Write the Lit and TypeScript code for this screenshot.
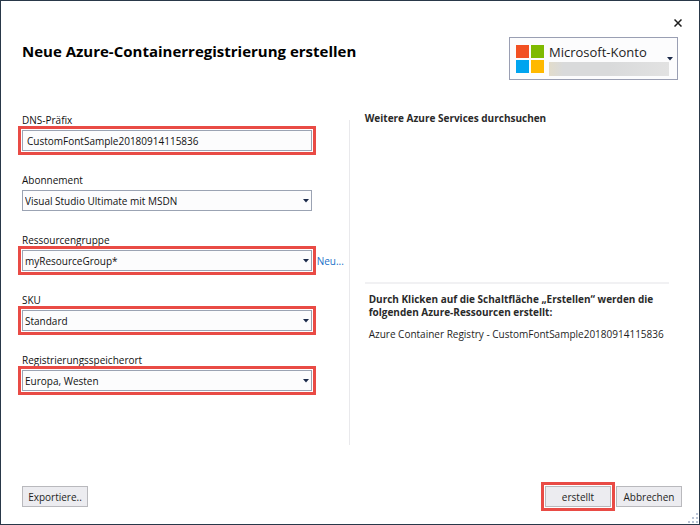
import { LitElement, html, css, svg } from "lit";
import { customElement } from "lit/decorators.js";
import { classMap } from "lit/directives/class-map.js";

interface Field {
  id: string;
  label: string;
  value: string;
  kind: "text" | "select";
  marked: boolean;
  link?: string;
}

const registryName = "CustomFontSample20180914115836";

const fields: Field[] = [
  { id: "dns", label: "DNS-Präfix", value: registryName, kind: "text", marked: true },
  { id: "subscription", label: "Abonnement", value: "Visual Studio Ultimate mit MSDN", kind: "select", marked: false },
  { id: "group", label: "Ressourcengruppe", value: "myResourceGroup*", kind: "select", marked: true, link: "Neu..." },
  { id: "sku", label: "SKU", value: "Standard", kind: "select", marked: true },
  { id: "location", label: "Registrierungsspeicherort", value: "Europa, Westen", kind: "select", marked: true },
];

const gripDots = [[8, 0], [4, 4], [8, 4], [0, 8], [4, 8], [8, 8]];

@customElement("app-root")
export class AppRoot extends LitElement {
  static styles = css`
    :host {
      display: block;
      font-family: "Open Sans", "Noto Sans", sans-serif;
      font-size: 10px;
      line-height: 16px;
      color: #1e1e1e;
    }
    * { box-sizing: border-box; }
    .dialog {
      position: relative;
      display: flex;
      flex-direction: column;
      min-height: 100vh;
      padding: 16px 17px 17px 21px;
      border: 1px solid #293849;
      background: #fff;
    }
    button, input, select { font: inherit; color: inherit; margin: 0; }
    .header { display: flex; justify-content: space-between; align-items: flex-start; }
    .title { margin: 22px 0 0; font-size: 15px; line-height: 24px; font-weight: 700; color: #000; }
    .tools { display: flex; flex-direction: column; align-items: flex-end; gap: 8px; padding-right: 4px; }
    .close { display: flex; padding: 2px 0; border: 0; background: none; margin-right: -4px; }
    .account {
      display: flex;
      align-items: center;
      height: 43px;
      padding: 0 4px 0 6px;
      border: 1px solid #9a9fb3;
      background: #fcfcfd;
      text-align: left;
    }
    .who { display: block; width: 114px; margin-left: 5px; font-size: 13px; line-height: 20px; white-space: nowrap; }
    .redacted {
      display: block;
      width: 120px;
      height: 14px;
      margin-left: 5px;
      margin-right: -2px;
      background: linear-gradient(90deg, #e2dccb, #d9dadb 12%, #d9dadb 50%, #e2e2e2);
    }
    .body { display: grid; grid-template-columns: minmax(0, 49fr) minmax(0, 50fr); margin-top: 32px; }
    .form { display: flex; flex-direction: column; gap: 21px; }
    .field { display: grid; grid-template-columns: minmax(0, 1fr) 32px; column-gap: 5px; row-gap: 2px; align-items: center; }
    .label { grid-column: 1 / -1; color: #111; }
    .control { position: relative; display: flex; }
    .box {
      width: 100%;
      height: 21px;
      padding: 0 16px 0 2px;
      border: 1px solid #9ba3b3;
      border-radius: 0;
      background: #fcfcfd;
      color: #111;
      line-height: 18px;
      appearance: none;
      outline: none;
    }
    .text { padding-left: 4px; }
    .marked { outline: 3px solid #e94b45; outline-offset: 1px; }
    .arrow { position: absolute; right: 3px; top: 9px; pointer-events: none; }
    .link { color: #1a70c8; text-decoration: none; }
    .side { margin-top: 8px; padding: 0 13px 0 15px; min-height: 325px; border-left: 1px solid #e9e9ec; }
    .heading { margin: 0; font-size: 10px; line-height: 13px; font-weight: 700; color: #2a2a2a; }
    .services { display: flow-root; height: 164px; border-bottom: 2px solid #f1f1f3; }
    .services .heading { margin-top: -8px; }
    .summary { padding: 9px 0 0 4px; }
    .resource { margin: 7px 0 0; white-space: nowrap; }
    .footer { display: flex; gap: 5px; margin-top: auto; }
    .action {
      min-width: 66px;
      height: 21px;
      padding: 0 5px;
      border: 1px solid #b9b9bd;
      background: #ececf0;
      line-height: 18px;
      white-space: nowrap;
    }
    .first { margin-right: auto; }
    .grip { position: absolute; right: 1px; bottom: 1px; }
  `;

  private arrow(cls = "") {
    return html`<svg class=${cls} width="6" height="4" viewBox="0 0 6 4" aria-hidden="true"><path d="M0 0H6L3 3.4Z" fill="#1b2a4a"/></svg>`;
  }

  private field(f: Field) {
    const classes = classMap({ box: true, text: f.kind === "text", marked: f.marked });
    return html`
      <div class="field">
        <label class="label" for=${f.id}>${f.label}</label>
        <div class="control">
          ${f.kind === "text"
            ? html`<input id=${f.id} class=${classes} type="text" .value=${f.value} />`
            : html`<select id=${f.id} class=${classes}><option>${f.value}</option></select>${this.arrow("arrow")}`}
        </div>
        ${f.link ? html`<a class="link" href="#">${f.link}</a>` : ""}
      </div>`;
  }

  render() {
    return html`
      <main class="dialog">
        <header class="header">
          <h1 class="title">Neue Azure-Containerregistrierung erstellen</h1>
          <div class="tools">
            <button class="close" aria-label="Schließen">
              <svg width="8" height="8" viewBox="0 0 8 8"><path d="M0.5 0.5L7.5 7.5M7.5 0.5L0.5 7.5" stroke="#1e1e1e" stroke-width="1.5"/></svg>
            </button>
            <button class="account">
              <svg width="28" height="28" viewBox="0 0 28 28" aria-hidden="true">
                <path d="M0 0H13V13H0Z" fill="#f25022"/><path d="M15 0H28V13H15Z" fill="#7fba00"/>
                <path d="M0 15H13V28H0Z" fill="#00a4ef"/><path d="M15 15H28V28H15Z" fill="#ffb900"/>
              </svg>
              <span><span class="who">Microsoft-Konto</span><span class="redacted"></span></span>
              ${this.arrow()}
            </button>
          </div>
        </header>
        <div class="body">
          <form class="form">${fields.map((f) => this.field(f))}</form>
          <aside class="side">
            <section class="services"><h2 class="heading">Weitere Azure Services durchsuchen</h2></section>
            <section class="summary">
              <h2 class="heading">Durch Klicken auf die Schaltfläche „Erstellen“ werden die folgenden Azure-Ressourcen erstellt:</h2>
              <p class="resource">Azure Container Registry - ${registryName}</p>
            </section>
          </aside>
        </div>
        <footer class="footer">
          <button class="action first">Exportiere..</button>
          <button class="action marked">erstellt</button>
          <button class="action">Abbrechen</button>
        </footer>
        <svg class="grip" width="10" height="10" viewBox="0 0 10 10" aria-hidden="true">
          ${gripDots.map(([x, y]) => svg`<rect x=${x} y=${y} width="2" height="2" fill="#bcc5d6"/>`)}
        </svg>
      </main>`;
  }
}
